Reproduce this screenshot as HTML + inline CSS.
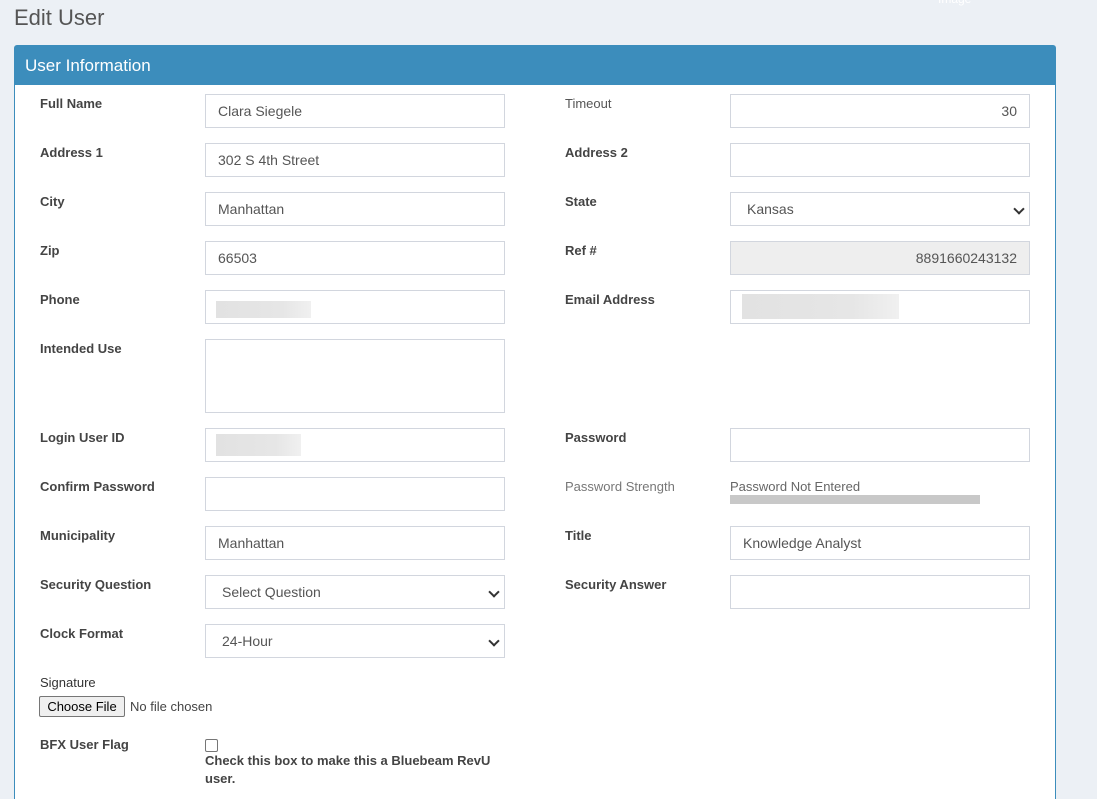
<!DOCTYPE html>
<html><head><meta charset="utf-8"><style>
*{box-sizing:border-box;margin:0;padding:0}
html{width:1097px;height:799px;overflow:hidden}
body{width:1097px;height:799px;background:#ecf0f5;font-family:"Liberation Sans",sans-serif;position:relative;overflow:hidden}
.a{position:absolute}
h1{position:absolute;left:14px;top:5px;font-size:22px;font-weight:normal;color:#555}
.panel{position:absolute;left:14px;top:45px;width:1042px;height:754px;background:#fff;border:1px solid #3c8dbc;border-bottom:none;border-radius:3px 3px 0 0}
.hd{position:absolute;left:0;top:0;width:100%;height:39px;background:#3c8dbc;color:#fff;font-size:17px;padding:10px 0 0 10px}
.l{position:absolute;font-size:13px;font-weight:bold;color:#444}
.n{font-weight:normal;color:#555}
.i{position:absolute;width:300px;height:34px;border:1px solid #d2d6de;background:#fff;font-size:14px;color:#555;padding:8px 12px}
.r{text-align:right}
.s::after{content:"";position:absolute;right:6px;top:12px;width:6px;height:6px;border-right:2px solid #333;border-bottom:2px solid #333;transform:rotate(45deg)}
.blur{position:absolute;background:linear-gradient(90deg,#e2e2e2,#e6e6e6 70%,#f0f0f0)}
</style></head><body>
<h1>Edit User</h1>
<div class="a" style="left:938px;top:-8px;color:#fff;font-size:12px">Image</div>
<div class="panel"><div class="hd">User Information</div></div>

<div class="l" style="left:40px;top:96px">Full Name</div><div class="i" style="left:205px;top:94px">Clara Siegele</div>
<div class="l n" style="left:565px;top:96px">Timeout</div><div class="i r" style="left:730px;top:94px">30</div>

<div class="l" style="left:40px;top:145px">Address 1</div><div class="i" style="left:205px;top:143px">302 S 4th Street</div>
<div class="l" style="left:565px;top:145px">Address 2</div><div class="i" style="left:730px;top:143px"></div>

<div class="l" style="left:40px;top:194px">City</div><div class="i" style="left:205px;top:192px">Manhattan</div>
<div class="l" style="left:565px;top:194px">State</div><div class="i s" style="left:730px;top:192px;padding-left:16px">Kansas</div>

<div class="l" style="left:40px;top:243px">Zip</div><div class="i" style="left:205px;top:241px">66503</div>
<div class="l" style="left:565px;top:243px">Ref #</div><div class="i r" style="left:730px;top:241px;background:#eee">8891660243132</div>

<div class="l" style="left:40px;top:292px">Phone</div><div class="i" style="left:205px;top:290px"></div><div class="blur" style="left:216px;top:301px;width:95px;height:17px"></div>
<div class="l" style="left:565px;top:292px">Email Address</div><div class="i" style="left:730px;top:290px"></div><div class="blur" style="left:742px;top:294px;width:157px;height:25px"></div>

<div class="l" style="left:40px;top:341px">Intended Use</div><div class="i" style="left:205px;top:339px;height:74px"></div>

<div class="l" style="left:40px;top:430px">Login User ID</div><div class="i" style="left:205px;top:428px"></div><div class="blur" style="left:216px;top:434px;width:85px;height:22px"></div>
<div class="l" style="left:565px;top:430px">Password</div><div class="i" style="left:730px;top:428px"></div>

<div class="l" style="left:40px;top:479px">Confirm Password</div><div class="i" style="left:205px;top:477px"></div>
<div class="l n" style="left:565px;top:479px;color:#777">Password Strength</div>
<div class="l n" style="left:730px;top:479px;color:#666">Password Not Entered</div>
<div class="a" style="left:730px;top:495px;width:250px;height:9px;background:#c8c8c8"></div>

<div class="l" style="left:40px;top:528px">Municipality</div><div class="i" style="left:205px;top:526px">Manhattan</div>
<div class="l" style="left:565px;top:528px">Title</div><div class="i" style="left:730px;top:526px">Knowledge Analyst</div>

<div class="l" style="left:40px;top:577px">Security Question</div><div class="i s" style="left:205px;top:575px;padding-left:16px">Select Question</div>
<div class="l" style="left:565px;top:577px">Security Answer</div><div class="i" style="left:730px;top:575px"></div>

<div class="l" style="left:40px;top:626px">Clock Format</div><div class="i s" style="left:205px;top:624px;padding-left:16px">24-Hour</div>

<div class="l n" style="left:40px;top:675px;color:#333">Signature</div>
<div class="a" style="left:39px;top:696px;width:86px;height:21px;border:1px solid #767676;border-radius:2px;background:#efefef;font-size:13px;color:#000;text-align:center;padding-top:2px">Choose File</div>
<div class="a" style="left:130px;top:699px;font-size:13px;color:#444">No file chosen</div>

<div class="l" style="left:40px;top:737px">BFX User Flag</div>
<div class="a" style="left:205px;top:739px;width:13px;height:13px;border:1px solid #767676;border-radius:2px;background:#fff"></div>
<div class="l" style="left:205px;top:752px;line-height:18px;width:300px">Check this box to make this a Bluebeam RevU user.</div>
</body></html>
